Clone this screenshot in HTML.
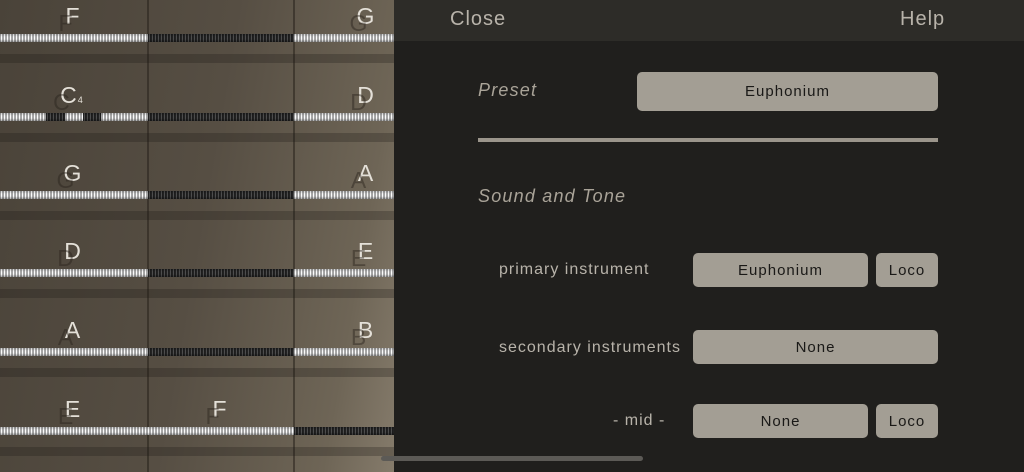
<!DOCTYPE html>
<html><head><style>
*{margin:0;padding:0;box-sizing:border-box}
body{width:1024px;height:472px;overflow:hidden;background:#201f1d;font-family:"Liberation Sans",sans-serif;position:relative}
#left{position:absolute;left:0;top:0;width:394px;height:472px;background:linear-gradient(100deg,#4a4339 0%,#564e43 50%,#6e6556 85%,#857b6b 100%);overflow:hidden}
.fret{position:absolute;top:0;width:2px;height:472px;background:rgba(40,35,28,.55)}
.band{position:absolute;left:0;width:394px;height:9px;background:rgba(30,26,20,.28)}
.str{position:absolute;height:8px;background:repeating-linear-gradient(90deg,#6a6a6a 0,#fff 1.3px,#fff 1.8px,#6a6a6a 3px)}
.str::after{content:"";position:absolute;inset:0;background:linear-gradient(#0003,#0000 35%,#0000 65%,#0005)}
.str.dk{background:repeating-linear-gradient(90deg,#000 0,#5a5a5a 1.3px,#3a3a3a 2px,#000 3px)}
.lab{position:absolute;font-size:23px;color:#e4e0d8;transform:translateX(-50%);letter-spacing:1px}
.lab::before{content:attr(data-t);position:absolute;left:-7px;top:7px;color:rgba(40,34,26,.45)}
#hdr{position:absolute;left:394px;top:0;width:630px;height:41px;background:#2d2c28}
.t{position:absolute;color:#b8b3aa;font-size:16px;letter-spacing:1px;white-space:nowrap}
.it{font-style:italic;font-size:18px;color:#a9a398;letter-spacing:1.2px}
.btn{position:absolute;background:#a39e94;border-radius:5px;color:#1a1917;font-size:15px;letter-spacing:1px;display:flex;align-items:center;justify-content:center}
</style></head><body>
<div id="left">
<div class="fret" style="left:147px"></div><div class="fret" style="left:293px"></div>
<div class="band" style="top:54px"></div><div class="band" style="top:133px"></div><div class="band" style="top:211px"></div><div class="band" style="top:289px"></div><div class="band" style="top:368px"></div><div class="band" style="top:447px"></div>

<div class="str" style="top:34px;left:0;width:148px"></div><div class="str dk" style="top:34px;left:148px;width:146px"></div><div class="str" style="top:34px;left:294px;width:100px"></div>
<div class="str" style="top:113px;left:0;width:148px"></div><div class="str dk" style="top:113px;left:46px;width:19px"></div><div class="str dk" style="top:113px;left:83px;width:18px"></div><div class="str dk" style="top:113px;left:148px;width:146px"></div><div class="str" style="top:113px;left:294px;width:100px"></div>
<div class="str" style="top:191px;left:0;width:148px"></div><div class="str dk" style="top:191px;left:148px;width:146px"></div><div class="str" style="top:191px;left:294px;width:100px"></div>
<div class="str" style="top:269px;left:0;width:148px"></div><div class="str dk" style="top:269px;left:148px;width:146px"></div><div class="str" style="top:269px;left:294px;width:100px"></div>
<div class="str" style="top:348px;left:0;width:148px"></div><div class="str dk" style="top:348px;left:148px;width:146px"></div><div class="str" style="top:348px;left:294px;width:100px"></div>
<div class="str" style="top:427px;left:0;width:294px"></div><div class="str dk" style="top:427px;left:294px;width:100px"></div>

<div class="lab" data-t="F" style="left:73px;top:3px">F</div>
<div class="lab" data-t="G" style="left:366px;top:3px">G</div>
<div class="lab" data-t="C" style="left:72px;top:82px">C<span style="font-size:9px">4</span></div>
<div class="lab" data-t="D" style="left:366px;top:82px">D</div>
<div class="lab" data-t="G" style="left:73px;top:160px">G</div>
<div class="lab" data-t="A" style="left:366px;top:160px">A</div>
<div class="lab" data-t="D" style="left:73px;top:238px">D</div>
<div class="lab" data-t="E" style="left:366px;top:238px">E</div>
<div class="lab" data-t="A" style="left:73px;top:317px">A</div>
<div class="lab" data-t="B" style="left:366px;top:317px">B</div>
<div class="lab" data-t="E" style="left:73px;top:396px">E</div>
<div class="lab" data-t="F" style="left:220px;top:396px">F</div>
</div>
<div id="hdr"></div>
<div class="t" style="left:450px;top:8px;font-size:20px">Close</div>
<div class="t" style="left:900px;top:8px;font-size:20px">Help</div>
<div class="t it" style="left:478px;top:80px">Preset</div>
<div class="btn" style="left:637px;top:72px;width:301px;height:39px">Euphonium</div>
<div style="position:absolute;left:478px;top:138px;width:460px;height:4px;background:#9b958b"></div>
<div class="t it" style="left:478px;top:186px">Sound and Tone</div>
<div class="t" style="left:499px;top:261px">primary instrument</div>
<div class="btn" style="left:693px;top:253px;width:175px;height:34px">Euphonium</div>
<div class="btn" style="left:876px;top:253px;width:62px;height:34px">Loco</div>
<div class="t" style="left:499px;top:339px">secondary instruments</div>
<div class="btn" style="left:693px;top:330px;width:245px;height:34px">None</div>
<div class="t" style="left:613px;top:412px">- mid -</div>
<div class="btn" style="left:693px;top:404px;width:175px;height:34px">None</div>
<div class="btn" style="left:876px;top:404px;width:62px;height:34px">Loco</div>
<div style="position:absolute;left:381px;top:456px;width:262px;height:5px;border-radius:3px;background:#5c5a56"></div>
</body></html>
